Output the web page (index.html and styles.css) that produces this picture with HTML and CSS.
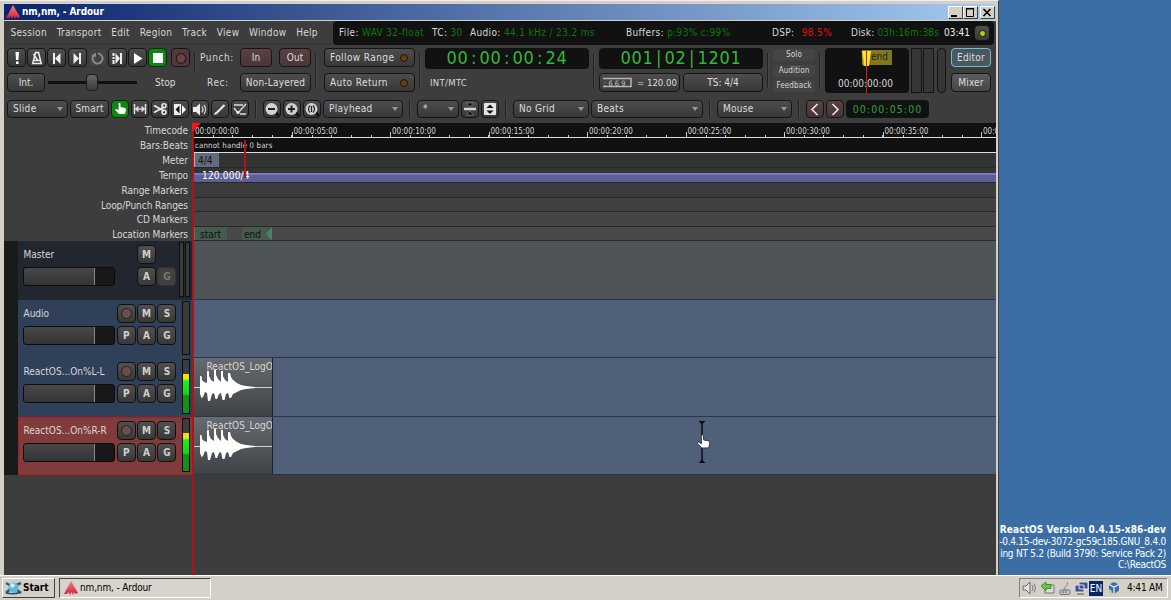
FILE: index.html
```html
<!DOCTYPE html>
<html lang="en">
<head>
    <meta charset="UTF-8">
    <title>nm,nm, - Ardour</title>
    <link rel="stylesheet" href="styles.css">
</head>
<body>
    <svg width="0" height="0" class="defs">
        <defs>
            <linearGradient id="red" x1="0" y1="0" x2="0" y2="1">
                <stop offset="0" stop-color="#f0808c"/>
                <stop offset="1" stop-color="#d01f3c"/>
            </linearGradient>
            <symbol id="logo" viewBox="0 0 14 14">
                <path d="M7 0L14 12L11 13L10 11L9 14L7.500 11L6 14L4.500 11L3 13L0 13Z" fill="url(#red)"/>
            </symbol>
            <symbol id="hand" viewBox="0 0 14 14">
                <path d="M5 1.500Q6 .3 7 1.500V5.500L12 6.500Q13 7 12.800 9L11.800 13H5.500L1.500 9Q.8 7.500 2.500 7.500L5 9Z"/>
            </symbol>
            <symbol id="wave" viewBox="0 0 78 58">
                <path d="M0 29.500H78" stroke="#d0d0d0"/>
                <path d="M6 29V18L7.500 18L8 22L10 24L13 25V13L15 13V18L17 22L20 24V12L22 12V17L24 21L27 24V13L29 13V18L31 22L34 24V15L36 15L37 19L39 22L43 25L47 27L52 28L61 29V30L52 31L47 32L43 34L39 36L37 40H35.500L34 35L32 36L30.500 42H28.500L27 35L25 36L23 41H21.500L20 35L18 36L16 43H14L13 35L11 34L9 39L7.500 40L6 36Z" fill="#fff"/>
            </symbol>
        </defs>
    </svg>

    <div class="desktop">
        <div class="window">
            <div class="titlebar">
                <svg class="logo"><use href="#logo"/></svg>
                <span class="title">nm,nm, - Ardour</span>
                <div class="winbtn"><svg width="12" height="11"><path d="M2 9h6" stroke="#000" stroke-width="2"/></svg></div>
                <div class="winbtn"><svg width="12" height="11"><path d="M2 2h8M2.500 2v7.500h7V2" fill="none" stroke="#000"/><path d="M2 1.500h8" stroke="#000"/></svg></div>
                <div class="winbtn close"><svg width="12" height="11"><path d="M2.500 2l7 7M9.500 2l-7 7" stroke="#000" stroke-width="1.600"/></svg></div>
            </div>

            <div class="client">
                <div class="menubar">
                    <div class="menus">
                        <span>Session</span><span>Transport</span><span>Edit</span><span>Region</span><span>Track</span><span>View</span><span>Window</span><span>Help</span>
                    </div>
                    <div class="status">
                        <span class="st-file">File: <b>WAV 32-float</b></span>
                        <span class="st-tc">TC: <b>30</b></span>
                        <span class="st-audio">Audio: <b>44.1 kHz / 23.2 ms</b></span>
                        <span class="st-buf">Buffers: <b>p:93% c:99%</b></span>
                        <span class="st-dsp">DSP: <b class="bad">98.5%</b></span>
                        <span class="st-disk">Disk: <b>03h:16m:38s</b></span>
                        <span class="st-time">03:41</span>
                        <div class="btn led-btn"><i></i></div>
                    </div>
                </div>

                <div class="transport">
                    <div class="col sec-transport">
                        <div class="row">
                            <div class="btn ic"><svg viewBox="0 0 18 18"><path d="M7.500 3h3.500l-.6 8H8zM8 12.500h2.600V15H8z" fill="#fff"/></svg></div>
                            <div class="btn ic"><svg viewBox="0 0 18 18"><path d="M7.500 3.500h3l2.800 11H4.700zM6 11.500h6.500M9.500 11L5.500 5" fill="none" stroke="#eee" stroke-width="1.500"/></svg></div>
                            <div class="btn ic"><svg viewBox="0 0 18 18"><path d="M5 4h2v11H5zM12.500 4v11L7 9.500z" fill="#eee"/></svg></div>
                            <div class="btn ic"><svg viewBox="0 0 18 18"><path d="M11 4h2v11h-2zM5.500 4v11L11 9.500z" fill="#eee"/></svg></div>
                            <div class="btn ic flat"><svg viewBox="0 0 18 18"><path d="M6 6a5 5 0 1 0 4-1.500" fill="none" stroke="#8a8a8a" stroke-width="2"/><path d="M3.500 6.500L8 3.500V8z" fill="#8a8a8a"/></svg></div>
                            <div class="btn ic"><svg viewBox="0 0 18 18"><path d="M4.500 4h2v3h-2zM4.500 8h2v2h-2zM4.500 11h2v4h-2zM12 4h2v11h-2zM7.500 4l4.500 5.500L7.500 15z" fill="#eee"/></svg></div>
                            <div class="btn ic"><svg viewBox="0 0 18 18"><path d="M5 4v11l8.500-5.500z" fill="#fff"/></svg></div>
                            <div class="btn ic green"><svg viewBox="0 0 18 18"><path d="M4 4h10v10H4z" fill="#fff"/></svg></div>
                            <div class="btn ic rec"><svg viewBox="0 0 18 18"><circle cx="9" cy="9.500" r="4.800" fill="#6d4445" stroke="#2b1a1a" stroke-width="1.300"/></svg></div>
                        </div>
                        <div class="row">
                            <div class="btn int">Int.</div>
                            <div class="shuttle"><div class="knob"></div></div>
                            <span class="stop">Stop</span>
                        </div>
                    </div>
                    <div class="sep short"></div>
                    <div class="col sec-punch">
                        <div class="row"><span class="plabel">Punch:</span><div class="btn dark-red">In</div><div class="btn dark-red">Out</div></div>
                        <div class="row"><span class="plabel rlabel">Rec:</span><div class="btn layered">Non-Layered</div></div>
                    </div>
                    <div class="sep"></div>
                    <div class="col sec-follow">
                        <div class="btn opt">Follow Range<i></i></div>
                        <div class="btn opt">Auto Return<i></i></div>
                    </div>
                    <div class="sep"></div>
                    <div class="col sec-clock">
                        <div class="clock">00<i>:</i>00<i>:</i>00<i>:</i>24</div>
                        <span class="sync">INT/MTC</span>
                    </div>
                    <div class="sep"></div>
                    <div class="col sec-clock">
                        <div class="clock">001<i>|</i>02<i>|</i>1201</div>
                        <div class="row pair">
                            <div class="btn tempo-btn"><svg width="31" height="11"><path d="M1 1.500h28v8H1" fill="none" stroke="#b5b5b5" stroke-width="1.500"/><text x="2" y="9">: 6 6 9</text></svg>= 120.00</div>
                            <div class="btn ts">TS: 4/4</div>
                        </div>
                    </div>
                    <div class="sep"></div>
                    <div class="alerts"><span>Solo</span><span>Audition</span><span>Feedback</span></div>
                    <div class="sep"></div>
                    <div class="mini">
                        <div class="mini-end">end</div>
                        <svg class="mini-head" width="12" height="45"><path d="M1 3h9L8 18H3z" fill="#f4e92a"/><path d="M1 3l2 15" stroke="#c9b400"/><path d="M5.500 3v42" stroke="#e11414"/></svg>
                        <div class="mini-time">00:00:00:00</div>
                    </div>
                    <div class="gauges"><i></i><i></i><i class="thin"></i></div>
                    <div class="col modes">
                        <div class="btn editor">Editor</div>
                        <div class="btn mixer">Mixer</div>
                    </div>
                </div>

                <div class="tools">
                    <div class="btn drop w-slide">Slide</div>
                    <div class="btn w-smart">Smart</div>
                    <div class="btn tool green"><svg viewBox="0 0 18 18"><use href="#hand" x="3" y="2" width="13" height="13" fill="#fff"/></svg></div>
                    <div class="btn tool"><svg viewBox="0 0 18 18"><path d="M3.500 4v10M14.500 4v10M5 9h8M7.500 6.500L5 9l2.500 2.500M10.500 6.500L13 9l-2.500 2.500" fill="none" stroke="#ddd" stroke-width="1.500"/></svg></div>
                    <div class="btn tool"><svg viewBox="0 0 18 18"><path d="M3 5.500l10 5.500M3 12.500L13 7" stroke="#eee" stroke-width="1.600"/><circle cx="13" cy="5.800" r="2" fill="none" stroke="#eee" stroke-width="1.500"/><circle cx="13" cy="12.200" r="2" fill="none" stroke="#eee" stroke-width="1.500"/></svg></div>
                    <div class="btn tool"><svg viewBox="0 0 18 18"><path d="M3 4h7v11H3z" fill="#eee"/><path d="M8.500 5.500v8L4.500 9.500z" fill="#111"/><path d="M11 5v9l4-4.500z" fill="#fff"/></svg></div>
                    <div class="btn tool"><svg viewBox="0 0 18 18"><path d="M2 7h3l4-3.500v12L5 12H2z" fill="#eee"/><path d="M11 6.500q2 3 0 6M13 5q3.200 4.500 0 9" fill="none" stroke="#ccc" stroke-width="1.300"/></svg></div>
                    <div class="btn tool"><svg viewBox="0 0 18 18"><path d="M5 13.500L13.500 5" stroke="#eee" stroke-width="2"/><path d="M3 15l1-3 2 2z" fill="#eee"/></svg></div>
                    <div class="btn tool"><svg viewBox="0 0 18 18"><path d="M3 5h9M3 8l4 5 8-9M9 14h6" fill="none" stroke="#ddd" stroke-width="1.400"/><circle cx="7" cy="12.500" r="1.600" fill="#eee"/></svg></div>
                    <div class="sep"></div>
                    <div class="btn tool"><svg viewBox="0 0 18 18"><path d="M12 12l4 4" stroke="#111" stroke-width="3"/><circle cx="8.500" cy="9" r="6" fill="#d2d2d2"/><path d="M5 9h7" stroke="#222" stroke-width="2"/></svg></div>
                    <div class="btn tool"><svg viewBox="0 0 18 18"><path d="M12 12l4 4" stroke="#111" stroke-width="3"/><circle cx="8.500" cy="9" r="6" fill="#d2d2d2"/><path d="M5 9h7M8.500 5.500v7" stroke="#222" stroke-width="2"/></svg></div>
                    <div class="btn tool"><svg viewBox="0 0 18 18"><path d="M12 12l4 4" stroke="#111" stroke-width="3"/><circle cx="8.500" cy="9" r="6" fill="#d2d2d2"/><path d="M7 5.500q-3 3.500 0 7M10 5.500q3 3.500 0 7M8.500 6v6" fill="none" stroke="#222" stroke-width="1.200"/></svg></div>
                    <div class="btn drop w-playhead">Playhead</div>
                    <div class="sep"></div>
                    <div class="btn drop w-star">*</div>
                    <div class="btn tool"><svg viewBox="0 0 18 18"><path d="M3 9h12" stroke="#d5d5d5" stroke-width="2.500"/><path d="M5.500 3h7L9 7zM5.500 15h7L9 11z" fill="#0c0c0c" stroke="#aaa" stroke-width=".5"/></svg></div>
                    <div class="btn tool"><svg viewBox="0 0 18 18"><rect x="3" y="3" width="12" height="12" rx="1" fill="#e4e4e4"/><path d="M5.500 8L9 4.500 12.500 8zM5.500 10.500h7L9 14z" fill="#111"/></svg></div>
                    <div class="sep"></div>
                    <div class="btn drop w-grid">No Grid</div>
                    <div class="btn drop w-beats">Beats</div>
                    <div class="sep"></div>
                    <div class="btn drop w-mouse">Mouse</div>
                    <div class="sep"></div>
                    <div class="btn tool nudge"><svg viewBox="0 0 18 18"><path d="M11.500 4L6 9.500l5.500 5.500" fill="none" stroke="#f0e6e6" stroke-width="1.600"/></svg></div>
                    <div class="btn tool nudge"><svg viewBox="0 0 18 18"><path d="M6.500 4L12 9.500 6.500 15" fill="none" stroke="#f0e6e6" stroke-width="1.600"/></svg></div>
                    <div class="nudge-clock">00:00:05:00</div>
                </div>

                <div class="rulers">
                    <div class="ruler"><span>Timecode</span>
                        <div class="lane timecode">
                            <div>00:00:00:00</div><div>00:00:05:00</div><div>00:00:10:00</div><div>00:00:15:00</div><div>00:00:20:00</div><div>00:00:25:00</div><div>00:00:30:00</div><div>00:00:35:00</div><div>00:00:40:00</div>
                        </div>
                    </div>
                    <div class="ruler"><span>Bars:Beats</span><div class="lane bars">cannot handle 0 bars</div></div>
                    <div class="ruler"><span>Meter</span><div class="lane meter"><div class="flag">4/4</div></div></div>
                    <div class="ruler"><span>Tempo</span><div class="lane tempo">120.000/4</div></div>
                    <div class="ruler"><span>Range Markers</span><div class="lane"></div></div>
                    <div class="ruler low"><span>Loop/Punch Ranges</span><div class="lane l2"></div></div>
                    <div class="ruler"><span>CD Markers</span><div class="lane l3"></div></div>
                    <div class="ruler low"><span>Location Markers</span><div class="lane l4"><div class="loc start">start</div><div class="loc end">end</div></div></div>
                </div>

                <div class="tracks">
                    <div class="track master">
                        <div class="head">
                            <div class="controls">
                                <div class="line"><span class="name">Master</span><div class="tb">M</div></div>
                                <div class="line"><div class="fader"></div><div class="tb">A</div><div class="tb off">G</div></div>
                            </div>
                            <div class="vu"></div><div class="vu"></div>
                        </div>
                        <div class="canvas"></div>
                    </div>
                    <div class="track short">
                        <div class="head">
                            <div class="controls">
                                <div class="line"><span class="name">Audio</span><div class="tb arm"><i></i></div><div class="tb">M</div><div class="tb">S</div></div>
                                <div class="line"><div class="fader"></div><div class="tb">P</div><div class="tb">A</div><div class="tb">G</div></div>
                            </div>
                            <div class="vu wide"></div>
                        </div>
                        <div class="canvas"></div>
                    </div>
                    <div class="track">
                        <div class="head">
                            <div class="controls">
                                <div class="line"><span class="name">ReactOS...On%L-L</span><div class="tb arm"><i></i></div><div class="tb">M</div><div class="tb">S</div></div>
                                <div class="line"><div class="fader"></div><div class="tb">P</div><div class="tb">A</div><div class="tb">G</div></div>
                            </div>
                            <div class="vu wide live"></div>
                        </div>
                        <div class="canvas"><div class="region"><span>ReactOS_LogO</span><svg><use href="#wave"/></svg></div></div>
                    </div>
                    <div class="track short selected">
                        <div class="head">
                            <div class="controls">
                                <div class="line"><span class="name">ReactOS...On%R-R</span><div class="tb arm"><i></i></div><div class="tb">M</div><div class="tb">S</div></div>
                                <div class="line"><div class="fader"></div><div class="tb">P</div><div class="tb">A</div><div class="tb">G</div></div>
                            </div>
                            <div class="vu wide live"></div>
                        </div>
                        <div class="canvas">
                            <div class="region"><span>ReactOS_LogO</span><svg><use href="#wave"/></svg></div>
                            <svg class="pointer" width="18" height="44"><path d="M9 2v40" stroke="#0a0d14" stroke-width="1.500"/><path d="M5.500 1h7L9 4.500zM5.500 43h7L9 39.500z" fill="#0a0d14"/><use href="#hand" x="3" y="14" width="15" height="15" fill="#fff" stroke="#1c2a45" stroke-width=".8"/></svg>
                        </div>
                    </div>
                </div>

                <div class="playhead"></div>
                <div class="end-mark"></div>
            </div>
        </div>

        <div class="wallpaper">
            <div class="version">ReactOS Version 0.4.15-x86-dev</div>
            <div class="build">-0.4.15-dev-3072-gc59c185.GNU_8.4.0</div>
            <div class="build">ing NT 5.2 (Build 3790: Service Pack 2)</div>
            <div class="build">C:\ReactOS</div>
        </div>
    </div>

    <div class="taskbar">
        <div class="start-btn">
            <svg width="17" height="14"><path d="M1 2q8 4 15 10M16 2Q8 5 1 12" stroke="#26618f" stroke-width="2.500" fill="none"/><circle cx="8.500" cy="6.500" r="5" fill="#69b4dc"/><circle cx="7.500" cy="4.500" r="2.200" fill="#d3edf8"/><path d="M1 12q8 2 15-1" stroke="#1e4f7c" fill="none" stroke-width="1.500"/></svg>Start
        </div>
        <div class="task"><svg class="logo"><use href="#logo"/></svg>nm,nm, - Ardour</div>
        <div class="tray">
            <svg width="16" height="14"><path d="M1 5h3l4-4v12L4 9H1z" fill="#e4e4e4" stroke="#666"/><path d="M10 4q2 3 0 6M12 2.500q3 4.500 0 9" stroke="#777" fill="none"/></svg>
            <svg width="16" height="14"><path d="M5 4h9v8H5z" fill="#ddd" stroke="#777"/><path d="M1 5l5-4v2.500h5v4H6V10z" fill="#6fc443" stroke="#2e7d1e" stroke-width=".8"/></svg>
            <svg width="14" height="14"><path d="M7 9Q5 6 8 5t1-4M7 8l-5 3h10z" stroke="#888" fill="none"/><rect x="2" y="9" width="10" height="4.500" rx="1" fill="#c4c4c4" stroke="#777"/><path d="M5 10v2M8 10v2" stroke="#555"/></svg>
            <svg width="15" height="14"><path d="M5 1h9v7H5zM1 4h9v7H1z" fill="#384f95" stroke="#ddd"/><path d="M3 13h7" stroke="#555"/></svg>
            <div class="lang">EN</div>
            <svg width="14" height="14" class="vm"><path d="M7 1l5 2.500v6L7 13 2 9.500v-6z" fill="#3a6cae"/><path d="M2 3.500L7 6l5-2.500M7 6v7" stroke="#e9eef6" stroke-width="1.300" fill="none"/><path d="M1 7l4 3-1 3z" fill="#d5c65d"/></svg>
            <span class="time">4:41 AM</span>
        </div>
    </div>
</body>
</html>
```

FILE: styles.css
```css
* {
    margin: 0;
    padding: 0;
    box-sizing: border-box;
}

body {
    width: 1171px;
    height: 600px;
    overflow: hidden;
    display: flex;
    flex-direction: column;
    font-family: "DejaVu Sans Condensed", "DejaVu Sans", sans-serif;
    font-stretch: condensed;
    font-size: 10px;
    line-height: 12px;
    color: #d8d8d8;
    white-space: nowrap;
    background: #3a6ea5;
}

i {
    font-style: normal;
}

.defs {
    position: absolute;
}

.desktop {
    display: flex;
    height: 575px;
}

.window {
    width: 999px;
    padding: 3px 2px 1px 4px;
    background: #d4d0c8;
    border-right: 1px solid #404040;
    border-top: 1px solid #f0eeea;
}

.titlebar {
    display: flex;
    align-items: center;
    height: 16px;
    padding: 0 1px 0 2px;
    background: linear-gradient(90deg, #0a246a, #a6caf0);
}

.logo {
    width: 14px;
    height: 14px;
}

.title {
    flex: 1;
    margin-left: 2px;
    color: #fff;
    font-weight: bold;
    letter-spacing: -0.1px;
}

.winbtn {
    width: 15px;
    height: 13px;
    background: #d4d0c8;
    border: 1px solid;
    border-color: #fff #404040 #404040 #fff;
}

.winbtn svg {
    display: block;
}

.close {
    margin-left: 2px;
}

.client {
    position: relative;
    height: 554px;
    margin-top: 1px;
    background: #3d3d3d;
    overflow: hidden;
}

/* menu and status line */
.menubar {
    display: flex;
    height: 24px;
}

.menus {
    display: flex;
    width: 329px;
    padding: 6px 0 0 6.5px;
    gap: 9.8px;
    letter-spacing: 0.3px;
    border-bottom: 1px solid #353535;
}

.status {
    display: flex;
    align-items: center;
    width: 661px;
    padding-left: 6px;
    background: #111;
    border-radius: 4px;
    letter-spacing: 0.35px;
}

.status b {
    font-weight: normal;
    color: #0b780b;
}

.status .bad {
    margin-left: 4px;
    color: #e00f0f;
}

.st-file { width: 93px; }
.st-tc { width: 38px; }
.st-audio { width: 156px; }
.st-buf { width: 146px; }
.st-dsp { width: 79px; }
.st-disk { width: 93px; letter-spacing: 0.2px; }
.st-time { width: 30px; color: #eee; letter-spacing: 0; }

.btn {
    display: flex;
    align-items: center;
    justify-content: center;
    height: 19px;
    border: 1px solid #151515;
    border-radius: 4px;
    background: linear-gradient(#4d4d4d, #383838);
    color: #dedede;
}

.led-btn {
    width: 16px;
    height: 16px;
}

.led-btn i {
    width: 7px;
    height: 7px;
    border-radius: 50%;
    border: 1px solid #1a2205;
    background: #a5d810;
}

/* transport */
.transport {
    display: flex;
    height: 55px;
    padding: 3px 0 0 3px;
}

.col {
    display: flex;
    flex-direction: column;
    gap: 6px;
}

.row {
    display: flex;
    height: 19px;
    align-items: center;
}

.sep {
    width: 2px;
    height: 35px;
    margin: 5px 4px 0;
    border-left: 1px solid #222;
    border-right: 1px solid #484848;
}

.sep.short {
    height: 19px;
}

.sec-transport {
    width: 183px;
}

.ic {
    width: 19px;
    margin-right: 1.2px;
}

.ic svg,
.tool svg {
    width: 18px;
    height: 18px;
    flex: none;
}

.flat {
    background: #424242;
    border-color: #393939;
}

.green {
    background: #128412;
    border-color: #072c07;
}

.rec {
    margin-left: 2.500px;
    margin-right: 0;
    background: #523a3b;
}

.int {
    width: 38px;
}

.shuttle {
    width: 89px;
    height: 3px;
    margin-left: 3px;
    background: #111;
}

.knob {
    width: 12px;
    height: 17px;
    margin: -7px 0 0 38px;
    border: 1px solid #1c1c1c;
    border-radius: 4px;
    background: linear-gradient(#666, #3c3c3c);
}

.stop {
    margin-left: 18px;
}

.sec-punch {
    width: 111px;
}

.plabel {
    width: 40px;
    letter-spacing: 0.6px;
}

.rlabel {
    padding-left: 7px;
}

.dark-red {
    width: 32px;
    background: linear-gradient(#5a4142, #4a3536);
}

.dark-red + .dark-red {
    margin-left: 7px;
}

.layered {
    width: 71px;
    letter-spacing: 0.2px;
}

.sec-follow {
    width: 91px;
    margin-left: 3px;
}

.opt {
    justify-content: space-between;
    padding: 0 6px 0 5px;
    letter-spacing: 0.4px;
}

.opt i {
    width: 8px;
    height: 8px;
    border: 1.500px solid #151515;
    border-radius: 50%;
    background: #6b3f08;
}

.sec-clock {
    width: 164px;
    gap: 4px;
}

.clock {
    display: flex;
    justify-content: center;
    height: 21px;
    line-height: 20px;
    border-radius: 4px;
    background: #111;
    color: #33b838;
    font-size: 18px;
    letter-spacing: 0.7px;
}

.clock i {
    width: 11px;
    text-align: center;
}

.sync {
    margin: 4px 0 0 5px;
    font-size: 9.5px;
    letter-spacing: 0.3px;
}

.pair {
    gap: 3px;
}

.tempo-btn {
    width: 81px;
    font-size: 9.5px;
    gap: 4px;
}

.tempo-btn text {
    font-size: 7.5px;
    fill: #c8c8c8;
}

.ts {
    flex: 1;
}

.alerts {
    display: flex;
    flex-direction: column;
    gap: 3.5px;
    width: 42px;
    padding-top: 1px;
}

.alerts span {
    height: 12px;
    font-size: 8px;
    text-align: center;
    letter-spacing: 0.1px;
    background: #444;
    border-radius: 3px;
}

.mini {
    position: relative;
    width: 84px;
    height: 45px;
    border-radius: 4px;
    background: #111;
}

.mini-end {
    width: 30px;
    height: 15px;
    margin: 2px 0 0 37px;
    padding: 1px 0 0 9px;
    background: #81771f;
    color: #222;
}

.mini-head {
    position: absolute;
    left: 36px;
    top: 0;
}

.mini-time {
    margin: 13px 0 0 13px;
}

.gauges {
    display: flex;
    gap: 1px;
    width: 40px;
    padding-left: 2px;
    height: 45px;
}

.gauges i {
    width: 11px;
    border: 1px solid #151515;
    background: #363636;
}

.gauges .thin {
    width: 9px;
    margin-left: 2px;
    border-radius: 4px;
}

.modes {
    width: 40px;
    margin-left: 2px;
}

.editor {
    border: 1.500px solid #78b9d4;
    background: #49575f;
    letter-spacing: 0.2px;
}

.mixer {
    background: linear-gradient(#5c5c5c, #464646);
    letter-spacing: 0.2px;
}

/* edit tools */
.tools {
    display: flex;
    gap: 2px;
    height: 23px;
    padding-left: 3px;
}

.tools .btn {
    height: 18px;
}

.tool {
    width: 18px;
}

.tools .sep {
    height: 18px;
    margin: 0 4px;
}

.drop {
    justify-content: space-between;
    padding: 0 4px 0 5px;
    letter-spacing: 0.3px;
}

.drop::after {
    content: "";
    border: 3px solid transparent;
    border-top: 4px solid #999;
    border-bottom: 0;
}

.w-slide { width: 61px; }
.w-smart { width: 39px; letter-spacing: 0.2px; }
.w-playhead { width: 80px; }
.w-star { width: 42px; }
.w-grid { width: 76px; }
.w-beats { width: 112px; }
.w-mouse { width: 75px; }

.nudge {
    background: linear-gradient(#584243, #493536);
}

.nudge-clock {
    width: 83px;
    height: 18px;
    line-height: 18px;
    border-radius: 4px;
    background: #111;
    color: #2fa336;
    text-align: center;
    font-size: 10.5px;
    letter-spacing: 1.1px;
}

/* rulers */
.ruler {
    display: flex;
    height: 15px;
}

.ruler.low {
    height: 14px;
}

.ruler > span {
    width: 184px;
    margin-right: 6px;
    text-align: right;
    line-height: 16px;
    letter-spacing: -0.05px;
}

.lane {
    flex: 1;
    background: #3c3c3c;
    border-bottom: 1px solid #292929;
    overflow: hidden;
}

.timecode {
    display: flex;
    margin-left: -1px;
    background: #111;
    border-bottom: 1px solid #ddd;
    font-size: 8px;
    line-height: 17px;
}

.timecode div {
    flex: 0 0 98.5px;
    padding-left: 2px;
    background:
        linear-gradient(#ccc, #ccc) 0 100% / 1px 5px no-repeat,
        repeating-linear-gradient(90deg, #ccc 0 1px, transparent 1px 19.7px) 0 100% / 100% 2px no-repeat;
}

.bars {
    padding-left: 1px;
    background: #111;
    border-bottom: 1px solid #ddd;
    font-size: 7.800px;
    line-height: 16px;
    letter-spacing: 0.15px;
}

.meter {
    background: #333;
}

.flag {
    width: 25px;
    height: 14px;
    padding-left: 3px;
    background: #626b7b;
    border-left: 1px solid #aab4cc;
    color: #111;
    line-height: 15px;
}

.tempo {
    padding-left: 8px;
    background: linear-gradient(#343434 5px, #7a7cba 5px, #7a7cba 7px, #5d6096 7px);
    color: #fff;
    line-height: 15px;
    letter-spacing: 0.2px;
}

.l2 { background: #414141; }
.l3 { background: #454545; }

.l4 {
    display: flex;
    gap: 15px;
    background: #484848;
}

.loc {
    width: 33px;
    background: #465a4d;
    color: #111;
    line-height: 15px;
    padding-left: 5px;
}

.end {
    display: flex;
    justify-content: space-between;
    width: 30px;
    padding-left: 2px;
}

.end::after {
    content: "";
    border: 7px solid transparent;
    border-left: 0;
    border-right: 6px solid #4d8062;
}

.start {
    border-left: 1px solid #4d8062;
}

/* tracks */
.tracks {
    border-left: 14px solid #1a1a1a;
}

.track {
    display: flex;
    height: 59px;
}

.track.short {
    height: 58px;
}

.head {
    display: flex;
    width: 176px;
    padding: 1px 3px 3px 5px;
    background: #304058;
}

.controls {
    width: 156px;
    padding-top: 3px;
}

.line {
    display: flex;
    gap: 1.3px;
    height: 22px;
}

.name {
    width: 92.5px;
    padding: 4px 0 0 0.5px;
}

.master .name {
    margin-right: 20.3px;
}

.fader {
    width: 91.5px;
    height: 19px;
    margin-right: 1px;
    border: 1px solid #0c0c0c;
    border-radius: 3px;
    background: linear-gradient(90deg, transparent 70px, #888 70px, #888 71px, #181818 71px), linear-gradient(#484848, #343434);
}

.master .fader {
    margin-right: 21.3px;
}

.tb {
    width: 19px;
    height: 19px;
    border: 1px solid #111;
    border-radius: 4px;
    background: linear-gradient(#505050, #383838);
    font-weight: bold;
    line-height: 17px;
    text-align: center;
    color: #d0d0d0;
}

.off {
    background: #404040;
    border-color: #333;
    color: #777;
}

.arm i {
    display: block;
    width: 11px;
    height: 11px;
    margin: 3px;
    border: 1px solid #272020;
    border-radius: 50%;
    background: #6b4d4d;
}

.vu {
    width: 5px;
    margin-right: 1px;
    border: 1px solid #0d0d0d;
    background: #3a3a3a;
}

.wide {
    width: 8px;
    margin-left: 3px;
}

.live {
    background: linear-gradient(#3c3c3c 14px, #ffd800 14px, #e8e800 19px, #1bf01b 21px, #13d813 34px, #159015 36px);
}

.canvas {
    position: relative;
    flex: 1;
    background: #516079;
    border-bottom: 1px solid #2a354e;
}

.master .head {
    background: #22262f;
}

.master .canvas {
    background: #4f5458;
}

.selected .head {
    padding: 0 2px 2px 4px;
    background: #823b3b;
    border: 1px solid #b21a1c;
}

.region {
    position: relative;
    width: 79px;
    height: 100%;
    overflow: hidden;
    border-right: 1px solid #1c2230;
    background: linear-gradient(#676a6e, #3f4246);
}

.region span {
    display: block;
    margin-left: 12.500px;
    line-height: 17px;
    letter-spacing: 0.05px;
}

.region svg {
    position: absolute;
    left: 0;
    top: 0;
    width: 78px;
    height: 58px;
}

.pointer {
    position: absolute;
    left: 499px;
    top: 3px;
}

.playhead {
    position: absolute;
    left: 188px;
    top: 102px;
    width: 2px;
    height: 452px;
    background: #b01216;
}

.playhead::before {
    content: "";
    display: block;
    width: 0;
    border-top: 9px solid #f11;
    border-right: 9px solid transparent;
}

.end-mark {
    position: absolute;
    left: 240px;
    top: 119px;
    width: 2px;
    height: 38px;
    background: #b01216;
}

/* desktop text */
.wallpaper {
    display: flex;
    flex-direction: column;
    justify-content: flex-end;
    align-items: flex-end;
    width: 172px;
    padding: 0 5px 4px 0;
    overflow: hidden;
    color: #fff;
    line-height: 11.7px;
}

.version {
    font-weight: bold;
    letter-spacing: 0.1px;
}

.build {
    letter-spacing: -0.25px;
}

.taskbar {
    display: flex;
    align-items: center;
    height: 25px;
    padding: 0 3px 0 2px;
    background: #d4d0c8;
    border-top: 1px solid #fff;
    color: #000;
}

.start-btn {
    display: flex;
    align-items: center;
    gap: 1px;
    width: 53px;
    height: 20px;
    padding-left: 2px;
    border: 1px solid;
    border-color: #fff #404040 #404040 #fff;
    font-weight: bold;
}

.task {
    display: flex;
    align-items: center;
    gap: 2px;
    width: 152px;
    height: 20px;
    margin-left: 4px;
    padding-left: 4px;
    border: 1px solid;
    border-color: #404040 #fff #fff #404040;
    background: #d8d4cd;
    letter-spacing: -0.15px;
}

.tray {
    display: flex;
    align-items: center;
    gap: 2px;
    width: 149px;
    height: 20px;
    margin-left: auto;
    padding-left: 2px;
    border: 1px solid;
    border-color: #808080 #fff #fff #808080;
}

.lang {
    width: 14px;
    height: 15px;
    margin-left: -2px;
    background: #0a246a;
    color: #fff;
    text-align: center;
    line-height: 15px;
}

.vm {
    margin-left: 2px;
}

.time {
    margin-left: 4px;
    letter-spacing: -0.2px;
}
```
